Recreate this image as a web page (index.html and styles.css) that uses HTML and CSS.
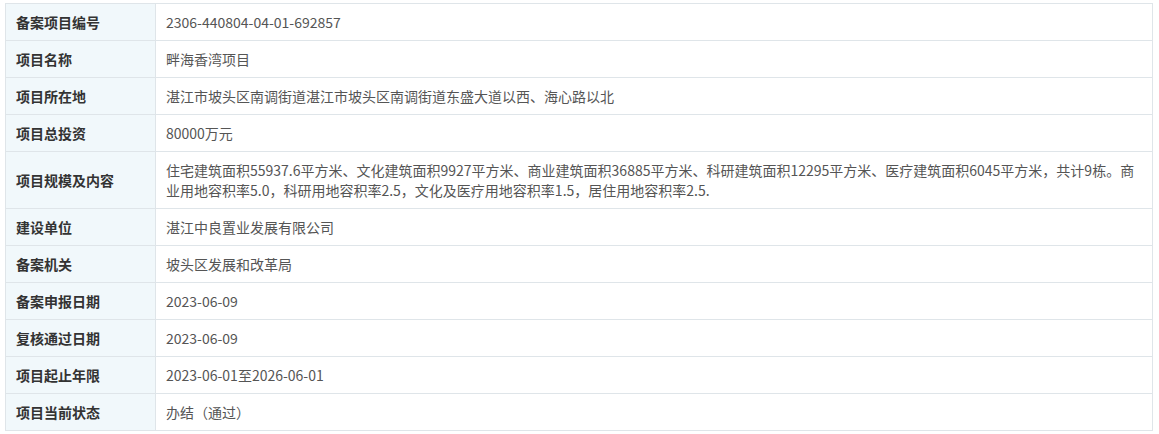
FILE: index.html
```html
<!DOCTYPE html>
<html>
<head>
  <title>项目备案信息</title>
  <link rel="stylesheet" href="styles.css">
</head>
<body>
  <table class="info-table">
    <tr>
      <th>备案项目编号</th>
      <td>2306-440804-04-01-692857</td>
    </tr>
    <tr>
      <th>项目名称</th>
      <td>畔海香湾项目</td>
    </tr>
    <tr>
      <th>项目所在地</th>
      <td>湛江市坡头区南调街道湛江市坡头区南调街道东盛大道以西、海心路以北</td>
    </tr>
    <tr>
      <th>项目总投资</th>
      <td>80000万元</td>
    </tr>
    <tr>
      <th>项目规模及内容</th>
      <td>住宅建筑面积55937.6平方米、文化建筑面积9927平方米、商业建筑面积36885平方米、科研建筑面积12295平方米、医疗建筑面积6045平方米，共计9栋。商业用地容积率5.0，科研用地容积率2.5，文化及医疗用地容积率1.5，居住用地容积率2.5.</td>
    </tr>
    <tr>
      <th>建设单位</th>
      <td>湛江中良置业发展有限公司</td>
    </tr>
    <tr>
      <th>备案机关</th>
      <td>坡头区发展和改革局</td>
    </tr>
    <tr>
      <th>备案申报日期</th>
      <td>2023-06-09</td>
    </tr>
    <tr>
      <th>复核通过日期</th>
      <td>2023-06-09</td>
    </tr>
    <tr>
      <th>项目起止年限</th>
      <td>2023-06-01至2026-06-01</td>
    </tr>
    <tr>
      <th>项目当前状态</th>
      <td>办结（通过）</td>
    </tr>
  </table>
</body>
</html>
```

FILE: styles.css
```css
body {
  margin: 0;
  padding: 3px 6px 0 5px;
  background-color: #fff;
  font-family: "Noto Sans CJK SC", "Noto Sans", sans-serif;
  font-size: 14px;
}
.info-table {
  width: 100%;
  border-collapse: collapse;
  table-layout: fixed;
}
.info-table th,
.info-table td {
  border: 1px solid #dfe5e9;
  padding: 8px 10px;
  line-height: 20px;
  text-align: left;
  vertical-align: middle;
}
.info-table th {
  width: 129px;
  background-color: #f1f8fb;
  color: #333;
  font-weight: bold;
}
.info-table td {
  color: #555;
  font-weight: normal;
}
```
